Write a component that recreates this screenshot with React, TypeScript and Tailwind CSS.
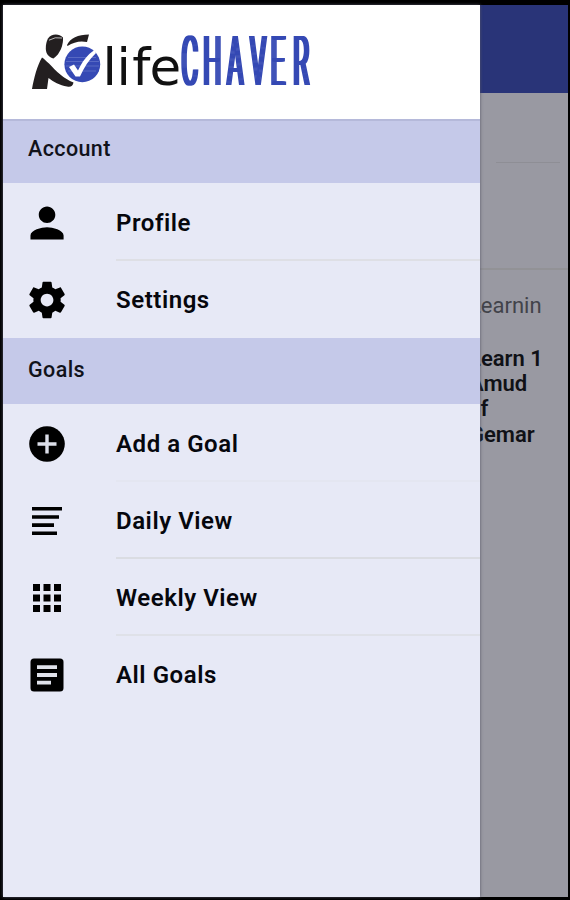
import React from "react";

// Each glyph is drawn in a 36-unit box at its final size.
function Icon({ name }: { name: IconName }) {
  return (
    <svg viewBox="0 0 36 36" className="size-9 overflow-visible">
      {name === "person" && (
        <path
          transform="translate(-6.800 -6.800) scale(2.070)"
          d="M12 12c2.21 0 4-1.79 4-4s-1.79-4-4-4-4 1.79-4 4 1.79 4 4 4zm0 2c-2.67 0-8 1.34-8 4v2h16v-2c0-2.66-5.33-4-8-4z"
        />
      )}
      {name === "settings" && (
        <path
          transform="translate(-3.800 -3.800) scale(1.820)"
          d="M19.43 12.98c.04-.32.07-.64.07-.98s-.03-.66-.07-.98l2.11-1.65c.19-.15.24-.42.12-.64l-2-3.46c-.12-.22-.39-.3-.61-.22l-2.49 1c-.52-.4-1.08-.73-1.69-.98l-.38-2.65C14.46 2.18 14.25 2 14 2h-4c-.25 0-.46.18-.49.42l-.38 2.65c-.61.25-1.17.59-1.69.98l-2.49-1c-.23-.09-.49 0-.61.22l-2 3.46c-.13.22-.07.49.12.64l2.11 1.65c-.04.32-.07.65-.07.98s.03.66.07.98l-2.11 1.65c-.19.15-.24.42-.12.64l2 3.46c.12.22.39.3.61.22l2.49-1c.52.4 1.08.73 1.69.98l.38 2.65c.03.24.24.42.49.42h4c.25 0 .46-.18.49-.42l.38-2.65c.61-.25 1.17-.59 1.69-.98l2.49 1c.23.09.49 0 .61-.22l2-3.46c.12-.22.07-.49-.12-.64l-2.11-1.65zM12 15.5c-1.93 0-3.5-1.57-3.5-3.5s1.57-3.5 3.5-3.5 3.5 1.57 3.5 3.5-1.57 3.5-3.5 3.5z"
        />
      )}
      {name === "add" && (
        <>
          <circle cx="18" cy="18" r="17.800" />
          <path d="M18 8.500v19M8.500 18h19" stroke="#dcdee9" strokeWidth="3.400" />
        </>
      )}
      {name === "daily" && <path d="M3 4h30v3.600H3zM3 12.200h27v3.600H3zM3 20.300h22v3.600H3zM3 28.500h25v3.600H3z" />}
      {name === "weekly" && (
        <path d="M4 4h7v7H4zM14.500 4h7v7h-7zM25 4h7v7h-7zM4 14.500h7v7H4zM14.500 14.500h7v7h-7zM25 14.500h7v7h-7zM4 25h7v7H4zM14.500 25h7v7h-7zM25 25h7v7h-7z" />
      )}
      {name === "all" && (
        <>
          <rect x="1.500" y="1.500" width="33" height="33" rx="3.500" />
          <path d="M8 10.200h20M8 18h20M8 25.700h14" stroke="#dfe1ea" strokeWidth="3.800" />
        </>
      )}
    </svg>
  );
}

type IconName = "person" | "settings" | "add" | "daily" | "weekly" | "all";

function Item({ icon, label, line = "border-transparent" }: { icon: IconName; label: string; line?: string }) {
  return (
    <li className="flex h-[77px] items-stretch pl-[26px]">
      <div className="flex w-[87px] shrink-0 items-center">
        <Icon name={icon} />
      </div>
      <div className={`flex flex-1 items-center border-b-2 pt-[3px] text-2xl font-semibold tracking-[.55px] text-[#06070d] ${line}`}>{label}</div>
    </li>
  );
}

function Logo() {
  return (
    <svg width="340" height="114" viewBox="3 5 340 114" className="block" aria-label="lifeCHAVER">
      <g fill="#231f20">
        <path d="M48 38.500C51 33.500 59 33 63 37.500C63.500 45 60 54 53.500 58.500C49 57.500 46 54 45.800 49C45.700 45 46.500 41 48 38.500Z" />
        <path d="M42 57.500C44 58.500 46 61 49 63.500C56 71 64 79 73.500 82.500C73 86 70.500 87.500 67 86.500C60 85.500 53 81.500 48.500 78L47 89H32C34 78 37 66 42 57.500Z" />
        <path d="M67 45C70 38.500 78 34.500 89 34.500L87 42C80 40.500 74 42 67.500 46Z" />
      </g>
      <path d="M49 40.200Q55 36.500 62 38" fill="none" stroke="#fff" strokeWidth=".7" />
      <circle cx="82.300" cy="64.300" r="17.900" fill="#3549b4" />
      <path d="M68 57.500h28M66 61.500h33M66 66h33M68 71h28" stroke="#7180cc" strokeWidth=".6" />
      <path d="M69 67L74 64.500L78 70.500C82 62 87 55 94.500 50L96 53C89 59.500 84 67.500 80 76.500H75.500Z" fill="#fff" />
      <text x="102.500 116.500 132.300 149.500" y="85.300" fontFamily="DejaVu Sans, sans-serif" fontSize="51.500" fill="#111">life</text>
      {/* Thickens the strokes sideways so the condensed letters keep heavy stems. */}
      <filter id="heavy" filterUnits="userSpaceOnUse" x="170" y="25" width="160" height="70" colorInterpolationFilters="sRGB">
        <feOffset in="SourceGraphic" dx="-1.700" result="a" />
        <feOffset in="SourceGraphic" dx="-.85" result="b" />
        <feOffset in="SourceGraphic" dx=".85" result="c" />
        <feOffset in="SourceGraphic" dx="1.700" result="d" />
        <feMerge>
          <feMergeNode in="a" />
          <feMergeNode in="b" />
          <feMergeNode in="SourceGraphic" />
          <feMergeNode in="c" />
          <feMergeNode in="d" />
        </feMerge>
      </filter>
      <g filter="url(#heavy)">
        <text
          transform="translate(0 85.300) scale(.36 1)"
          x="505 565 632 696 753 815"
          y="0"
          fontFamily="Roboto, sans-serif"
          fontWeight="300"
          fontSize="68.500"
          fill="#3549b4"
        >
          CHAVER
        </text>
      </g>
    </svg>
  );
}

export default function App() {
  return (
    <div className="relative flex h-[900px] w-[570px] overflow-hidden bg-black pt-[5px] pr-[2px] pb-[3px] pl-[3px] font-[Roboto,sans-serif]">
      <main className="flex flex-1 flex-col bg-[#9999a2]">
        <div className="h-[88px] bg-[#293478]" />
        <div className="mr-2 ml-[493px] h-[70px] border-b border-[#8e8e95]" />
        <div className="h-[107px] border-b-2 border-[#929296]" />
        <div className="ml-[466px] pt-[22px] text-[22px] leading-[28px] text-[#42434a]">Learnin</div>
        <div className="ml-[466px] pt-[26px] text-[22px] leading-[25.200px] font-semibold text-[#101116]">
          <div>Learn 1</div>
          <div>Amud</div>
          <div className="-ml-px">of</div>
          <div>Gemar</div>
        </div>
      </main>
      <aside className="absolute top-[5px] bottom-[3px] left-[3px] flex w-[477px] flex-col bg-[#e7e9f6] shadow-[0_0_3px_#555566]">
        <header className="h-[114px] bg-white">
          <Logo />
        </header>
        <h2 className="h-[64px] border-t-2 border-[#b5b9da] bg-[#c5c9e9] pt-[12px] pl-[25px] text-[21.500px] leading-8 font-medium tracking-[.4px] text-[#11121a]">Account</h2>
        <ul className="pt-px">
          <Item icon="person" label="Profile" line="border-[#dedfe5]" />
          <Item icon="settings" label="Settings" />
        </ul>
        <h2 className="h-[66px] bg-[#c5c9e9] pt-[16px] pl-[25px] text-[21.500px] leading-8 font-medium tracking-[.4px] text-[#11121a]">Goals</h2>
        <ul className="pt-px">
          <Item icon="add" label="Add a Goal" line="border-[#e4e6f1]" />
          <Item icon="daily" label="Daily View" line="border-[#dadce2]" />
          <Item icon="weekly" label="Weekly View" line="border-[#dfe1e8]" />
          <Item icon="all" label="All Goals" />
        </ul>
      </aside>
    </div>
  );
}
